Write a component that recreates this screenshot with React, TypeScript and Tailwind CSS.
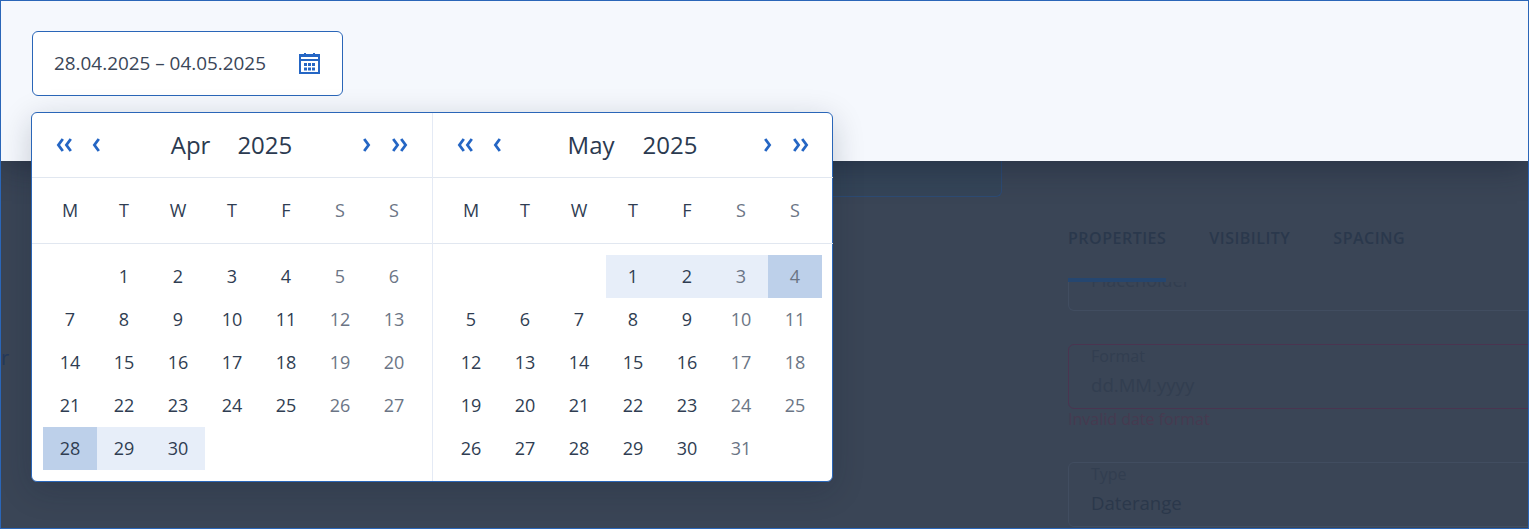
import React from 'react';

const BLUE = '#2566c4';

const Chevron: React.FC<{ dir: 'left' | 'right'; double?: boolean }> = ({ dir, double }) => (
  <svg width={double ? 16 : 8} height="14" viewBox={double ? '0 0 16 14' : '0 0 8 14'} fill="none" stroke={BLUE} strokeWidth="2.8">
    {dir === 'left' && double && (
      <>
        <path d="M6.8 1 2.4 7l4.4 6" />
        <path d="M14.8 1 10.4 7l4.4 6" />
      </>
    )}
    {dir === 'left' && !double && <path d="M6.8 1 2.4 7l4.4 6" />}
    {dir === 'right' && double && (
      <>
        <path d="M1.2 1 5.6 7l-4.4 6" />
        <path d="M9.2 1 13.6 7l-4.4 6" />
      </>
    )}
    {dir === 'right' && !double && <path d="M1.2 1 5.6 7l-4.4 6" />}
  </svg>
);

const CalendarIcon = () => (
  <svg width="21" height="21" viewBox="0 0 21 21">
    <rect x="0" y="1" width="21" height="20" fill={BLUE} />
    <rect x="5" y="0" width="2" height="4" fill={BLUE} />
    <rect x="14" y="0" width="2" height="4" fill={BLUE} />
    <rect x="2" y="4" width="17" height="2" fill="#fff" />
    <rect x="2" y="8" width="17" height="11" fill="#fff" />
    <g fill={BLUE}>
      <rect x="5" y="10" width="3" height="3" />
      <rect x="9" y="10" width="3" height="3" />
      <rect x="13" y="10" width="3" height="3" />
      <rect x="5" y="14.5" width="3" height="3" />
      <rect x="9" y="14.5" width="3" height="3" />
      <rect x="13" y="14.5" width="3" height="3" />
    </g>
  </svg>
);

type Cell = { day: number; tone?: 'range' | 'edge' } | null;

const WEEK = ['M', 'T', 'W', 'T', 'F', 'S', 'S'];

const april: Cell[] = [
  null,
  ...Array.from({ length: 27 }, (_, i) => ({ day: i + 1 })),
  { day: 28, tone: 'edge' },
  { day: 29, tone: 'range' },
  { day: 30, tone: 'range' },
];

const may: Cell[] = [
  null,
  null,
  null,
  { day: 1, tone: 'range' },
  { day: 2, tone: 'range' },
  { day: 3, tone: 'range' },
  { day: 4, tone: 'edge' },
  ...Array.from({ length: 27 }, (_, i) => ({ day: i + 5 })),
];

const Month: React.FC<{ name: string; cells: Cell[]; border?: boolean; gap: string }> = ({ name, cells, border, gap }) => (
  <div className={`flex flex-col ${border ? 'border-r border-[#e4eaf5] w-[401px]' : 'w-[400px]'}`}>
    <div className="h-[65px] shrink-0 flex items-center px-6 border-b border-[#e1e7f0]">
      <div className="flex items-center gap-[20px] w-[46px]">
        <Chevron dir="left" double />
        <Chevron dir="left" />
      </div>
      <div className={`flex-1 flex justify-center pr-[2px] text-[24px] text-[#2b3a50] ${gap}`}>
        <span>{name}</span>
        <span>2025</span>
      </div>
      <div className="flex items-center gap-[21px]">
        <Chevron dir="right" />
        <Chevron dir="right" double />
      </div>
    </div>
    <div className="h-[66px] shrink-0 grid grid-cols-[repeat(7,54px)] px-[11px] items-center border-b border-[#e1e7f0]">
      {WEEK.map((d, i) => (
        <div key={i} className={`text-center ${i > 4 ? 'text-[#6b7585]' : 'text-[#2f3d52]'}`}>
          {d}
        </div>
      ))}
    </div>
    <div className="grid grid-cols-[repeat(7,54px)] auto-rows-[43px] px-[11px] pt-[11px] pb-[11px]">
      {cells.map((c, i) => {
        const weekend = i % 7 > 4;
        const bg = c?.tone === 'edge' ? 'bg-[#bdd0ea]' : c?.tone === 'range' ? 'bg-[#e7eef9]' : '';
        return (
          <div key={i} className={`flex items-center justify-center ${bg} ${weekend ? 'text-[#6b7585]' : 'text-[#2f3d52]'}`}>
            {c?.day}
          </div>
        );
      })}
    </div>
  </div>
);

const Field: React.FC<{ label: string; value: string; error?: boolean }> = ({ label, value, error }) => (
  <div className={`h-[65px] rounded-md border px-[22px] pt-[1px] ${error ? 'border-[#4a3450]' : 'border-[#414d60]'}`}>
    <div className="text-[16px] leading-[20px] text-[#323e50]">{label}</div>
    <div className={`text-[18.6px] leading-[38px] ${error ? 'text-[#323e50]' : 'text-[#2b384b]'}`}>{value}</div>
  </div>
);

export default function App() {
  return (
    <div
      className="relative h-[529px] w-full overflow-hidden border border-[#2a66b8] bg-[#3a4556] text-[18px] flex flex-col"
      style={{ fontFamily: '"Open Sans", sans-serif' }}
    >
      <div className="relative z-10 h-[160px] shrink-0 bg-[#f5f8fd] pl-[31px] pt-[30px] shadow-[0_4px_32px_rgba(15,25,45,0.45)]">
        <div className="h-[65px] w-[311px] rounded-md border border-[#2a66b8] bg-white pl-[21px] pr-[22px] flex items-center justify-between text-[18.9px] text-[#3a4658]">
          <span>28.04.2025 – 04.05.2025</span>
          <CalendarIcon />
        </div>
      </div>

      {/* page behind the overlay */}
      <div className="flex-1 flex min-h-0">
        <div className="w-[1001px] shrink-0">
          <div className="ml-[100px] h-[36px] rounded-b-md border border-t-0 border-[#2d4b75] bg-[#354558]" />
          <div className="pt-[146px] text-[#25395a] text-[20px]">r</div>
        </div>
        <div className="ml-[66px] flex-1 min-w-0 overflow-hidden">
          <div className="relative z-[1] mt-[65px] h-[56px] flex gap-[43px] text-[16px] font-semibold tracking-[0.5px] text-[#2a384c] bg-[#3a4556]">
            <div className="relative h-[56px]">
              PROPERTIES
              <div className="absolute left-0 right-0 bottom-0 h-[4px] bg-[#25466f]" />
            </div>
            <div>VISIBILITY</div>
            <div>SPACING</div>
          </div>
          <div className="h-[29px] w-[600px] rounded-b-md border border-t-0 border-[#414d60] px-[22px] overflow-hidden">
            <div className="-mt-[12px] text-[18px] leading-[20px] text-[#323e50]">Placeholder</div>
          </div>
          <div className="w-[600px] mt-[33px]">
            <Field label="Format" value="dd.MM.yyyy" error />
            <div className="text-[16px] leading-[20px] text-[#463a50]">Invalid date format</div>
          </div>
          <div className="w-[600px] mt-[33px]">
            <Field label="Type" value="Daterange" />
          </div>
        </div>
      </div>

      <div className="absolute z-20 left-[30px] top-[111px] w-[802px] rounded-md border border-[#2a66b8] bg-white flex shadow-[0_8px_32px_rgba(15,25,45,0.2)]">
        <Month name="Apr" cells={april} border gap="gap-[27px]" />
        <Month name="May" cells={may} gap="gap-[28px]" />
      </div>
    </div>
  );
}
